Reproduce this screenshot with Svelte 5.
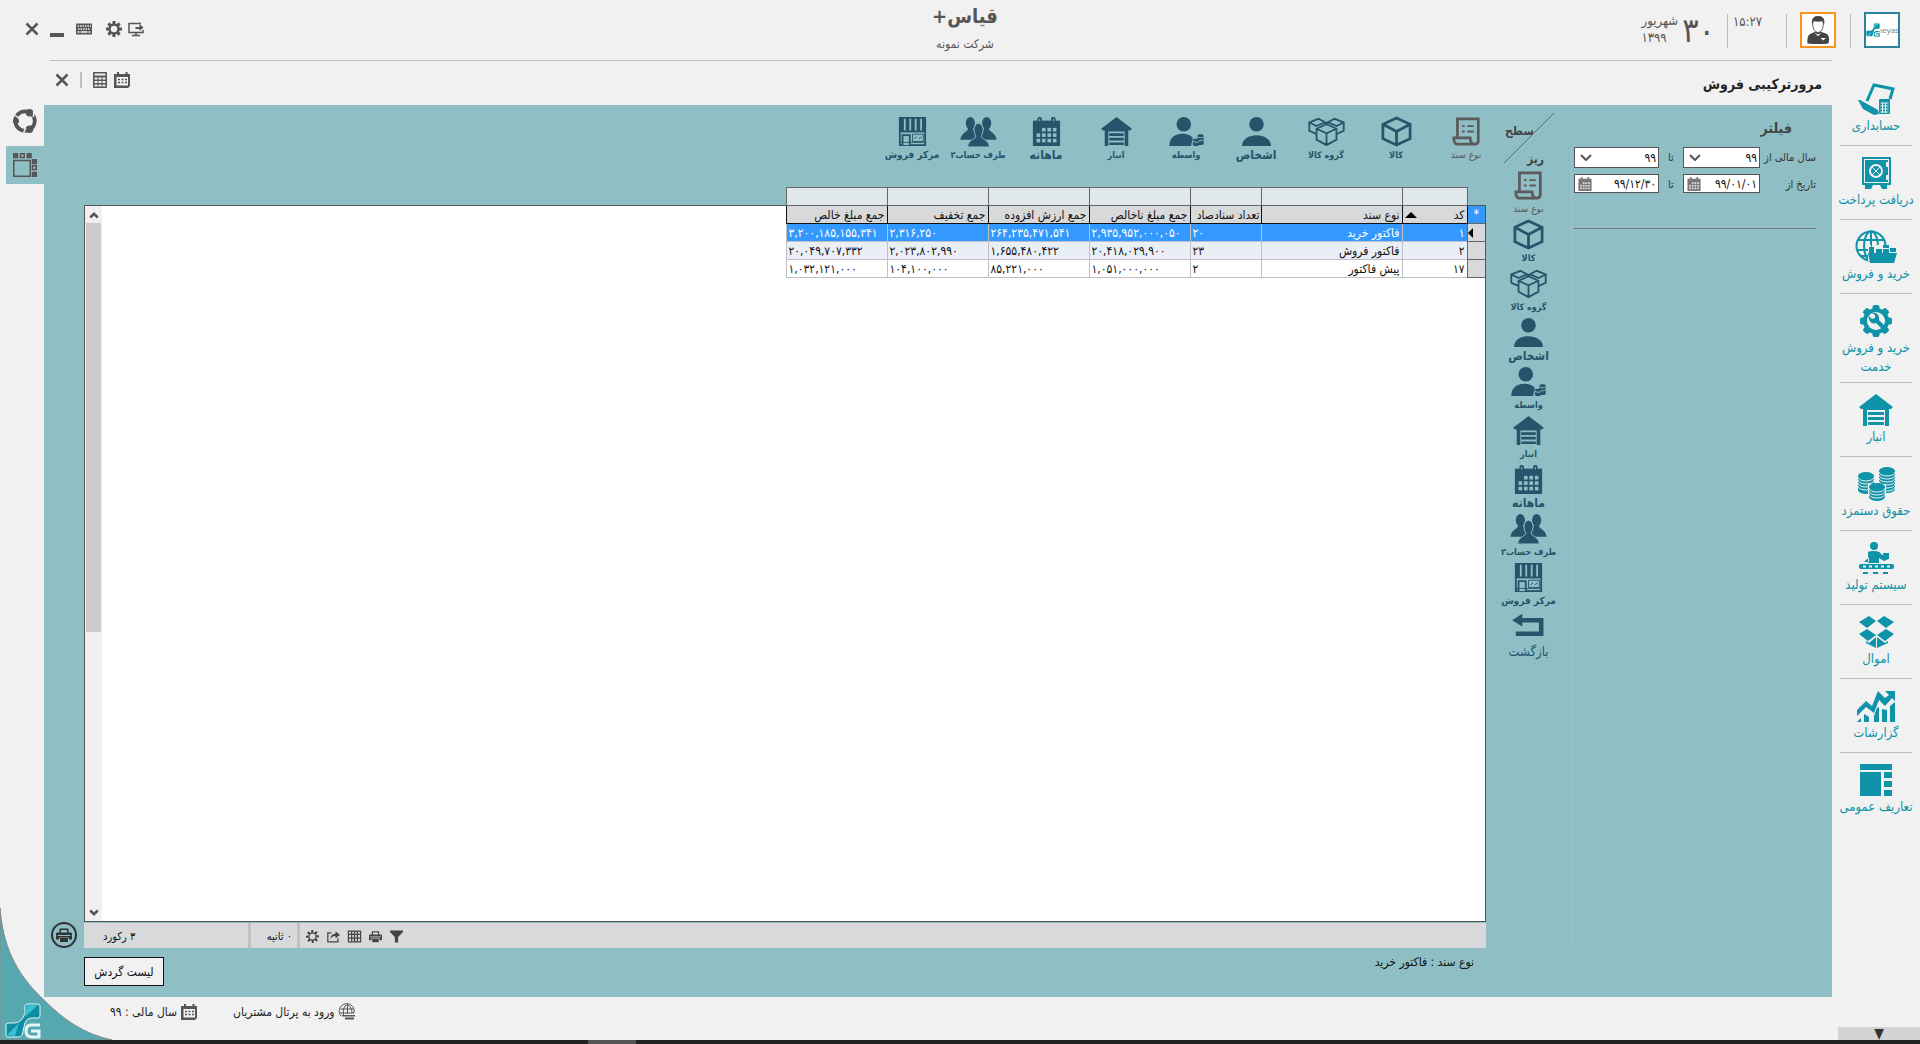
<script>
  const navItems = [
    { icon: 'ledger', label: 'حسابداری' },
    { icon: 'safe', label: 'دریافت پرداخت' },
    { icon: 'trade', label: 'خرید و فروش' },
    { icon: 'service', label: 'خرید و فروش خدمت' },
    { icon: 'store', label: 'انبار' },
    { icon: 'coins', label: 'حقوق دستمزد' },
    { icon: 'production', label: 'سیستم تولید' },
    { icon: 'assets', label: 'اموال' },
    { icon: 'reports', label: 'گزارشات' },
    { icon: 'general', label: 'تعاریف عمومی' },
  ];

  const levels = [
    { icon: 'doc', label: 'نوع سند', size: 'mid', muted: true },
    { icon: 'cube', label: 'کالا', size: 'small' },
    { icon: 'cubes', label: 'گروه کالا', size: 'small' },
    { icon: 'person', label: 'اشخاص', size: 'big' },
    { icon: 'broker', label: 'واسطه', size: 'small' },
    { icon: 'store', label: 'انبار', size: 'small' },
    { icon: 'month', label: 'ماهانه', size: 'big' },
    { icon: 'people', label: 'طرف حساب۲', size: 'small', narrow: true },
    { icon: 'shop', label: 'مرکز فروش', size: 'mid', narrow: true },
  ];

  const columns = [
    { title: 'کد', cls: 'code', sorted: true },
    { title: 'نوع سند', cls: 'kind' },
    { title: 'تعداد سنادصاد', cls: 'count' },
    { title: 'جمع مبلغ ناخالص', cls: 'amount' },
    { title: 'جمع ارزش افزوده', cls: 'amount' },
    { title: 'جمع تخفیف', cls: 'amount' },
    { title: 'جمع مبلغ خالص', cls: 'amount' },
  ];

  const rows = [
    ['۱', 'فاکتور خرید', '۲۰', '۲,۹۳۵,۹۵۲,۰۰۰,۰۵۰', '۲۶۴,۲۳۵,۴۷۱,۵۴۱', '۲,۳۱۶,۲۵۰', '۳,۲۰۰,۱۸۵,۱۵۵,۳۴۱'],
    ['۲', 'فاکتور فروش', '۲۳', '۲۰,۴۱۸,۰۲۹,۹۰۰', '۱,۶۵۵,۴۸۰,۴۲۲', '۲,۰۲۳,۸۰۲,۹۹۰', '۲۰,۰۴۹,۷۰۷,۳۳۲'],
    ['۱۷', 'پیش فاکتور', '۲', '۱,۰۵۱,۰۰۰,۰۰۰', '۸۵,۲۲۱,۰۰۰', '۱۰۴,۱۰۰,۰۰۰', '۱,۰۳۲,۱۲۱,۰۰۰'],
  ];

  let selected = $state(0);
  let dateFrom = $state('۹۹/۰۱/۰۱');
  let dateTo = $state('۹۹/۱۲/۳۰');
</script>

{#snippet icon(name)}
  <svg class="ic" viewBox="0 0 32 32" aria-hidden="true">
    {#if name === 'ledger'}
      <path d="M7 18 14 2 33 6 30 16" class="line w3" />
      <path d="M-2 17 0 17 18 27 19 31 14 32 3 26Z" />
      <rect x="19" y="16" width="11" height="15" rx="1" />
      <path d="M20.500 20H28.500M20.500 23H28.500M20.500 26H28.500M20.500 29H28.500M22.500 20V30M25.500 20V30" class="cutline" />
    {:else if name === 'safe'}
      <path d="M2 0H31V28H27V32H22L20 28H13L11 32H5V28H2Z" />
      <rect x="4.500" y="2.500" width="24" height="23" class="cutline" />
      <circle cx="16" cy="14" r="6" class="cutline w2" />
      <path d="M12 10 20 18M20 10 12 18" class="cutline" />
      <rect x="26" y="5" width="3" height="5" rx="1" class="cut" /><rect x="26" y="18" width="3" height="5" rx="1" class="cut" />
    {:else if name === 'trade'}
      <g class="line w2"><circle cx="11" cy="15" r="14.500" /><ellipse cx="11" cy="15" rx="7" ry="14.500" /><path d="M11 0V30M-2 9H24M-3 19H10M0 25H10" /></g>
      <path class="cut" d="M8 14H38V30H8Z" />
      <path d="M8 22H37L34 32H10Z" /><path d="M9 16H14V22H9ZM11 11H12V16H11ZM16 18H22V22H16ZM23 14H29V17H23ZM23 18H29V22H23ZM30 17H36V21H30Z" />
    {:else if name === 'service'}
      <g><circle cx="16" cy="16" r="13" />
        {#each [0, 45, 90, 135, 180, 225, 270, 315] as a}<rect x="12.500" y="0" width="7" height="8" rx="2" transform="rotate({a} 16 16)" />{/each}</g>
      <circle cx="16" cy="16" r="9" class="cut" />
      <path d="M9 11 12 14 15 13 15 10 12 8C17 7 20 11 19 15L25 21 22 24 16 18C12 20 8 16 9 11Z" />
    {:else if name === 'store'}
      <path d="M16 0 33 13 31 15H29V32H25V16H7V32H3V15H1L-1 13Z" /><path d="M8 18H24V21H8ZM8 23H24V26H8ZM8 28H24V31H8Z" />
    {:else if name === 'coins'}
      {#each [[6, 8, 6], [27, 3, 8], [17, 19, 4]] as [x, y, n]}
        <path class="cut" d="M{x - 9} {y - 3}H{x + 9}V{y + n * 2 + 4}H{x - 9}Z" />
        <path d="M{x - 8} {y}H{x + 8}V{y + n * 2 + 2}A8 4 0 0 1 {x - 8} {y + n * 2 + 2}Z" />
        <ellipse cx={x} cy={y} rx="8" ry="4" />
        {#each Array(Math.ceil(n * 2 / 3)) as _, i}<path class="cutline" d="M{x - 8} {y + 1 + i * 3}A8 4 0 0 0 {x + 8} {y + 1 + i * 3}" />{/each}
      {/each}
    {:else if name === 'production'}
      <circle cx="14" cy="4" r="4" /><path d="M8 21V10Q9 9 14 9 20 9 21 12L25 15 29 12 29 17 24 19 19 16V21ZM4 20H9L9 15Z" /><path d="M23 11H29V14H26L25 16H23Z" />
      <rect x="-1" y="22" width="35" height="5" rx="2" />
      <path d="M3 24.500H31" class="cutline w2" stroke-dasharray="3 3" /><path d="M3 31H29" class="line w2" stroke-dasharray="5 5" />
    {:else if name === 'assets'}
      <path d="M9 0 16 5 7 12-1 6ZM24 0 34 6 26 12 17 5ZM7 13 16 19 8 25-1 18ZM26 13 34 18 25 25 17 19ZM6 25 9 27 16 21V32L6 27ZM17 21 25 27 28 25V27L17 32Z" />
    {:else if name === 'reports'}
      <path d="M-3 20 6 11 12 16 18 1 25 8 29 5 25 1H35V11L32 8 25 16 19 10 14 23 6 17-3 26ZM-3 32 1 28V32ZM4 24 9 27V32H4ZM14 26 17 18 19 17V32H14ZM22 19 27 20V32H22ZM30 16 35 12V32H30Z" />
    {:else if name === 'general'}
      <path d="M0 0H32V6H0ZM0 8H21V32H0ZM24 8H32V14H24ZM24 17H32V23H24ZM24 26H32V32H24Z" />
    {:else if name === 'doc'}
      <path class="line w3" d="M6 22V2H29V26Q29 30 25 30H5Q2 29 2 23H20Q20 30 25 30" /><path class="line w2" d="M11 10H14M17 10H24M11 16H14M17 16H24" />
    {:else if name === 'cube'}
      <path class="line w3" d="M16 1 31 8V24L16 31 1 24V8ZM1 8 16 16 31 8M16 16V31" />
    {:else if name === 'cubes'}
      <path class="line w2" d="M16 8 27 13V25L16 31 5 25V13ZM5 13 16 18 27 13M16 18V31M5 19-3 15V6L7 2 15 6V8M-3 6 5 10 14 6M27 19 35 15V6L25 2 17 6V8M35 6 27 10 18 6" />
    {:else if name === 'person'}
      <circle cx="16" cy="8" r="8" /><path d="M0 32C0 16 32 16 32 32Z" />
    {:else if name === 'broker'}
      <circle cx="13" cy="8" r="8" /><path d="M-3 32C-3 16 17 16 23 23L21 32Z" />
      <g><rect x="23" y="24" width="7" height="8" rx="2" /><rect x="28" y="19" width="7" height="12" rx="2" /><path class="cutline" d="M23 27Q27 29 30 27M28 22Q32 24 35 22M30 26Q33 27 35 25" /></g>
    {:else if name === 'month'}
      <path d="M1 4H31V32H1Z" /><rect x="6" y="0" width="5" height="7" rx="2" /><rect x="21" y="0" width="5" height="7" rx="2" /><path class="cutline" d="M8.500 2V5M23.500 2V5" />
      {#each [12, 18, 24] as y}
        {#each [5, 11, 17, 23] as x}
          {#if y > 12 || x > 5}<rect class="cut" {x} {y} width="4" height="4" />{/if}
        {/each}
      {/each}
    {:else if name === 'people'}
      <ellipse cx="7" cy="7" rx="5" ry="7" /><ellipse cx="25" cy="7" rx="5" ry="7" /><path d="M-4 25C-3 17 4 17 5 12H10L14 25ZM36 25C35 17 28 17 27 12H22L18 25Z" />
      <path class="cutstroke" d="M11 14A5 7 0 0 1 21 14C21 18 19 20 19 22 21 25 27 25 28 33H4C5 25 11 25 13 22 13 20 11 18 11 14Z" />
    {:else if name === 'shop'}
      <path d="M1 0H31V32H1Z" /><path class="cut" d="M3 17H29V30H3Z" /><path class="cutline w2" d="M7.500 2V15M13.500 2V15M19.500 2V15M25.500 2V15" />
      <path d="M4 19H14V32H4Z" /><path class="cut" d="M6 21H12V31H6Z" /><path class="line" d="M16 19H28V27H16ZM18 24 21 22M23 24 26 22M1 28H31" />
    {:else if name === 'back'}
      <path class="line w5" d="M7 9H30V24H2" /><path d="M-2 9 9 2V16Z" />
    {:else if name === 'close'}
      <path class="line w5" d="M5 5 27 27M27 5 5 27" />
    {:else if name === 'min'}
      <path d="M2 24H30V32H2Z" />
    {:else if name === 'keyboard'}
      <rect x="0" y="5" width="32" height="22" rx="2" /><path class="cutline w3" stroke-dasharray="3 2" d="M3 10H30M4 16H29" /><path class="cutline w3" d="M3 22H7M9 22H23M25 22H29" />
    {:else if name === 'gear'}
      <circle cx="16" cy="16" r="9" class="line w5" />{#each [0, 45, 90, 135, 180, 225, 270, 315] as a}<rect x="13" y="0" width="6" height="7" transform="rotate({a} 16 16)" />{/each}
    {:else if name === 'cog'}
      <circle cx="16" cy="16" r="9" class="line w3" />{#each [0, 45, 90, 135, 180, 225, 270, 315] as a}<rect x="13" y="0" width="5" height="7" transform="rotate({a} 16 16)" />{/each}
    {:else if name === 'monitor'}
      <path class="line w3" d="M26 5H2V23H30V18M16 23V29M8 29H24" /><path d="M15 12H23V6L31 13 23 20V16H15Z" />
    {:else if name === 'calc'}
      <rect x="2" y="0" width="28" height="32" rx="2" /><path class="cut" d="M5 3H27V7H5Z" />
      {#each [11, 18, 25] as y}{#each [5, 13, 21] as x}<rect class="cut" {x} {y} width="6" height="4" />{/each}{/each}
    {:else if name === 'calendar'}
      <path d="M0 4H32V28L28 32H0Z" /><path class="cut" d="M5 10H28V27H5Z" /><rect x="6" y="0" width="4" height="7" /><rect x="23" y="0" width="4" height="7" />
      <path class="line w3" stroke-dasharray="4 3" d="M8 15H26M8 21H26" />
    {:else if name === 'cycle'}
      <circle cx="16" cy="16" r="13" class="line w5" /><circle cx="4" cy="16" r="4" /><circle cx="22" cy="5" r="5" /><circle cx="22" cy="27" r="5" /><path class="cutline w2" d="M2 8 8 12M28 2 27 11M14 32 17 25" />
    {:else if name === 'layout'}
      <path class="line w2" d="M1 10H23V31H1Z" /><path d="M0 0H7V7H0ZM9 0H16V7H9ZM18 0H25V7H18ZM25 8H32V15H25ZM25 16H32V23H25ZM25 25H32V32H25Z" /><path class="cut" d="M11 2H14V5H11ZM27 18H30V21H27Z" />
    {:else if name === 'printer'}
      <path d="M7 3H25V11H30Q32 11 32 14V25H26V21H6V25H0V14Q0 11 2 11H7Z" /><path class="cut" d="M10 6H22V11H10Z" /><path class="cutline w2" d="M3 17H29" /><path d="M8 22H24V30H8Z" />
    {:else if name === 'funnel'}
      <path d="M0 1H32V5L20 17V31H12V17L0 5Z" />
    {:else if name === 'grid'}
      <path class="line w3" d="M1 3H31V29H1ZM1 11H31M1 20H31M9 3V29M16 3V29M23 3V29" />
    {:else if name === 'export'}
      <path class="line w3" d="M11 7H2V29H27V20" /><path d="M8 22Q10 9 21 9V3L32 12 21 20V15Q13 14 8 22Z" />
    {:else if name === 'globe'}
      <g class="line w2"><path d="M4 24A15 15 0 1 1 30 18" /><path d="M9 23Q7 4 17 1 26 7 26 18M17 1V20M3 10H29M1 18H30" /></g><path d="M6 22H32V25H6ZM12 27H30V31H12Z" />
    {/if}
  </svg>
{/snippet}

{#snippet mark()}
  <svg class="mark" viewBox="0 0 36 36" role="img" aria-label="G">
    <path d="M20 3Q20 1 22 1H33Q35 1 35 3V13Q35 15 33 15H26Q22 15 20 20L17 32Q16 34 14 34H3Q1 34 1 32V22Q1 20 3 20H9Q17 20 20 10Z" class="shape" />
    <path d="M22 2H33L20 14ZM2 32 14 20 10 33Z" class="glow" />
    <path d="M35 22H26Q21 22 21 28 21 34 27 34H34V28H26" class="g" />
  </svg>
{/snippet}

<div class="app" dir="rtl" lang="fa">
  <header class="top">
    <div class="brand">
      <div class="logo-box">{@render mark()}<span dir="ltr">ıeyas</span></div>
      <i class="sep"></i>
      <button class="avatar" aria-label="کاربر">
        <svg viewBox="0 0 32 32"><path d="M4 31Q3 22 8 20L13 18H19L25 20Q30 22 28 31 16 34 4 31Z" /><path d="M10 8Q9 1 16 1 23 1 22 8V11Q21 18 16 19 11 18 10 11Z" fill="#fff" stroke="#444" /><path d="M9 10Q8 0 16 0 25 0 23 10L21 6Q16 7 11 6Z" /><path d="M12 19 16 23 20 19 16 21Z" fill="#fff" /><path d="M19 25H25L22 28Z" fill="#fff" /></svg>
      </button>
      <i class="sep"></i>
      <time class="clock">۱۵:۲۷</time>
      <i class="sep"></i>
      <div class="date"><strong>۳۰</strong><span>شهریور<br />۱۳۹۹</span></div>
    </div>
    <div class="name"><h1>قیاس+</h1><p>شرکت نمونه</p></div>
    <div class="win">
      <button aria-label="نمایشگر">{@render icon('monitor')}</button>
      <button aria-label="تنظیمات" class="g2">{@render icon('gear')}</button>
      <button aria-label="صفحه کلید" class="g3">{@render icon('keyboard')}</button>
      <button aria-label="کوچک کردن" class="g1">{@render icon('min')}</button>
      <button aria-label="بستن">{@render icon('close')}</button>
    </div>
  </header>

  <div class="middle">
    <nav class="side">
      <ul>
        {#each navItems as item}
          <li><a href="#{item.icon}">{@render icon(item.icon)}<span>{item.label}</span></a></li>
        {/each}
      </ul>
      <button class="more" aria-label="بیشتر">▼</button>
    </nav>

    <div class="center">
      <div class="titlebar">
        <h2>مرورترکیبی فروش</h2>
        <div class="tb-tools">
          <button aria-label="تقویم">{@render icon('calendar')}</button>
          <button aria-label="ماشین حساب">{@render icon('calc')}</button>
          <i></i>
          <button aria-label="بستن">{@render icon('close')}</button>
        </div>
      </div>

      <main class="panel">
        <div class="upper">
          <aside class="filter">
            <h3>فیلتر</h3>
            <form class="fields">
              <div class="field">
                <label for="year-from">سال مالی از</label>
                <span class="pick"><select id="year-from"><option>۹۹</option></select><svg viewBox="0 0 12 7"><path d="M1 1 6 6 11 1" /></svg></span>
                <label for="year-to" class="to">تا</label>
                <span class="pick"><select id="year-to"><option>۹۹</option></select><svg viewBox="0 0 12 7"><path d="M1 1 6 6 11 1" /></svg></span>
              </div>
              <div class="field">
                <label for="date-from">تاریخ از</label>
                <span class="datebox"><input id="date-from" type="text" bind:value={dateFrom} /><button type="button" aria-label="انتخاب تاریخ">{@render icon('month')}</button></span>
                <label for="date-to" class="to">تا</label>
                <span class="datebox"><input id="date-to" type="text" bind:value={dateTo} /><button type="button" aria-label="انتخاب تاریخ">{@render icon('month')}</button></span>
              </div>
              <hr />
            </form>
          </aside>

          <section class="work">
            <div class="strip">
              <div class="corner">
                <svg viewBox="0 0 50 50" aria-hidden="true"><path d="M0 50 50 0" /></svg>
                <span class="lvl">سطح</span><span class="det">ریز</span>
              </div>
              {#each levels as l}
                <button class="level {l.size}" class:muted={l.muted} class:narrow={l.narrow}>{@render icon(l.icon)}<span>{l.label}</span></button>
              {/each}
            </div>

            <div class="body">
              <div class="levels">
                {#each levels as l}
                  <button class="level {l.size}" class:muted={l.muted}>{@render icon(l.icon)}<span>{l.label}</span></button>
                {/each}
                <button class="level back">{@render icon('back')}<span>بازگشت</span></button>
              </div>

              <div class="data">
                <div class="sheet">
                  <div class="paper">
                    <div class="bar">
                      <button aria-label="بالا"><svg viewBox="0 0 8 6"><path d="M1 5 4 2 7 5" /></svg></button>
                      <div class="track"><div class="thumb"></div></div>
                      <button aria-label="پایین"><svg viewBox="0 0 8 6"><path d="M1 1 4 4 7 1" /></svg></button>
                    </div>
                  </div>
                  <table>
                    <thead>
                      <tr class="blank"><td class="ind"></td>{#each columns as c}<td class={c.cls}></td>{/each}</tr>
                      <tr>
                        <th class="ind star">*</th>
                        {#each columns as c}
                          <th class={c.cls}><span>{c.title}{#if c.sorted}<i class="sort"></i>{/if}</span></th>
                        {/each}
                      </tr>
                    </thead>
                    <tbody>
                      {#each rows as row, i}
                        <tr class:on={selected === i} onclick={() => (selected = i)}>
                          <td class="ind">{#if selected === i}<i class="cursor"></i>{/if}</td>
                          {#each row as cell, j}<td class={columns[j].cls}>{cell}</td>{/each}
                        </tr>
                      {/each}
                    </tbody>
                  </table>
                </div>
                <div class="status">
                  <div class="st-tools">
                    <button aria-label="فیلتر">{@render icon('funnel')}</button>
                    <button aria-label="چاپ">{@render icon('printer')}</button>
                    <button aria-label="جدول">{@render icon('grid')}</button>
                    <button aria-label="خروجی">{@render icon('export')}</button>
                    <button aria-label="تنظیمات">{@render icon('cog')}</button>
                  </div>
                  <span class="secs">۰ ثانیه</span>
                  <span class="count-rec">۳ رکورد</span>
                </div>
              </div>

              <div class="edge"><button class="round" aria-label="چاپ">{@render icon('printer')}</button></div>
            </div>
          </section>
        </div>
        <div class="lower">
          <p>نوع سند : فاکتور خرید</p>
          <button class="flow">لیست گردش</button>
        </div>
      </main>

      <footer class="foot">
        <a href="#portal">{@render icon('globe')}<span>ورود به پرتال مشتریان</span></a>
        <a href="#year">{@render icon('calendar')}<span>سال مالی : ۹۹</span></a>
      </footer>
    </div>

    <div class="rail">
      <button aria-label="گردش">{@render icon('cycle')}</button>
      <button aria-label="چیدمان" class="active">{@render icon('layout')}</button>
    </div>
  </div>

  <div class="taskbar"><i></i></div>

  <div class="swoosh">
    <svg class="curve" viewBox="0 0 112 132" aria-hidden="true"><path d="M0 0C3 36 14 64 44 92 64 112 84 126 112 132H0Z" /></svg>
    {@render mark()}
  </div>
</div>

<style>
  :global(body) { background: #f1f1f1; }
  .app {
    --bg: #f1f1f1;
    --panel: #8fbfc5;
    position: relative;
    display: flex;
    flex-direction: column;
    min-height: 100vh;
    background: var(--bg);
    color: #222;
    font-family: "DejaVu Sans Condensed", "DejaVu Sans", sans-serif;
    font-size: 12px;
    line-height: 16px;
  }
  .app * { box-sizing: border-box; }
  button, input, select { font: inherit; color: inherit; margin: 0; padding: 0; border: 0; background: none; }
  button { display: block; cursor: pointer; }
  h1, h2, h3, p, ul { margin: 0; padding: 0; }
  a { color: inherit; text-decoration: none; }

  .ic { display: block; width: 16px; height: 16px; fill: currentColor; overflow: visible; }
  .ic .line { fill: none; stroke: currentColor; stroke-width: 1px; }
  .ic .cut { fill: var(--bg); }
  .ic .cutline { fill: none; stroke: var(--bg); stroke-width: 1px; }
  .ic .cutstroke { stroke: var(--bg); stroke-width: 1px; }
  .ic .w2 { stroke-width: 2px; }
  .ic .w3 { stroke-width: 3px; }
  .ic .w5 { stroke-width: 5px; }

  .mark { display: block; }
  .mark .shape { fill: #0d8ca3; }
  .mark .glow { fill: #3cc0d2; }
  .mark .g { fill: none; stroke: #1a9ab0; stroke-width: 3px; }

  /* header */
  .top { display: grid; grid-template-columns: 1fr auto 1fr; height: 60px; color: #555; }
  .brand { display: flex; padding: 12px 20px 0 0; }
  .logo-box { display: flex; align-items: center; width: 36px; height: 36px; border: 2px solid #2f829c; background: #fff; direction: ltr; overflow: hidden; font: 8px "Liberation Sans", sans-serif; color: #888; }
  .logo-box .mark { width: 14px; height: 14px; flex: none; }
  .sep { width: 1px; height: 34px; margin: 2px 13px 0 14px; background: #bbb; }
  .avatar { width: 36px; height: 36px; border: 2px solid #f7941d; background: #fff; }
  .avatar svg { display: block; width: 28px; height: 28px; margin: auto; fill: #444; }
  .brand .avatar + .sep { margin-left: 24px; }
  .clock { width: 32px; font-size: 13px; padding-top: 2px; }
  .brand .clock + .sep { margin: 2px 2px 0 12px; }
  .date { display: flex; gap: 4px; }
  .date strong { font-size: 34px; line-height: 36px; font-weight: 400; }
  .date span { font-size: 13px; line-height: 17px; text-align: left; }
  .name { text-align: center; padding-left: 10px; }
  .name h1 { font-size: 20px; line-height: 32px; }
  .name p { font-size: 12px; line-height: 24px; }
  .win { display: flex; justify-content: flex-end; align-items: center; padding: 0 0 2px 24px; }
  .win .g2 { margin-right: 6px; }
  .win .g3 { margin: 0 14px 0 11px; }
  .win .g1 { margin-left: 9px; }

  .middle { display: flex; flex: 1; }

  /* main navigation */
  .side { display: flex; flex-direction: column; justify-content: space-between; width: 88px; padding-top: 12px; color: #0e93a8; }
  .side ul { list-style: none; }
  .side li { min-height: 74px; margin: 0 8px; border-bottom: 1px solid #bbb; }
  .side li:last-child { border: 0; }
  .side a { display: flex; flex-direction: column; align-items: center; margin: 0 -8px; padding: 11px 0 6px; }
  .side .ic { width: 32px; height: 32px; }
  .side span { max-width: 84px; margin-top: 1px; font-size: 13px; line-height: 19px; text-align: center; }
  .side .more { height: 13px; width: 82px; line-height: 13px; background: #d3d3d3; color: #333; font-size: 14px; }

  .center { display: flex; flex-direction: column; flex: 1; min-width: 0; }
  .titlebar { display: flex; justify-content: space-between; height: 45px; border-top: 1px solid #bbb; margin-left: 6px; padding: 0 10px 0 4px; }
  .titlebar h2 { font-size: 14px; line-height: 46px; }
  .tb-tools { display: flex; align-items: center; height: 38px; color: #555; }
  .tb-tools i { width: 2px; height: 16px; margin: 0 10px; background: #c0c0c0; }
  .tb-tools button + button { margin-right: 6px; }

  .panel { --bg: #8fbfc5; display: flex; flex-direction: column; flex: 1; background: var(--panel); }
  .upper { display: flex; flex: 1; }

  /* filters */
  .filter { display: flex; flex-direction: column; width: 261px; color: #333; }
  .filter h3 { height: 42px; padding-right: 40px; font-size: 14px; line-height: 46px; color: #444; }
  .fields { flex: 1; border-left: 1px solid #b9b9b9; padding: 0 16px 0 2px; }
  .field { display: grid; grid-template-columns: 56px 77px 24px minmax(0, 1fr); height: 27px; align-items: start; }
  .field label { font-size: 11px; line-height: 22px; white-space: nowrap; }
  .field .to { text-align: center; }
  .pick { display: grid; height: 21px; border: 1px solid #555; background: #fff; color: #111; }
  .pick select, .pick svg { grid-area: 1 / 1; }
  .pick select { appearance: none; padding: 0 2px; line-height: 16px; width: 100%; outline: 0; }
  .pick svg { justify-self: end; align-self: center; width: 12px; height: 7px; margin-left: 5px; pointer-events: none; }
  .pick path { fill: none; stroke: #555; stroke-width: 2px; }
  .datebox { --bg: #d8d8d8; display: flex; height: 19px; border: 1px solid #555; background: #fff; color: #111; }
  .datebox input { flex: 1; width: 0; min-width: 0; padding-right: 2px; outline: 0; text-align: right; }
  .datebox button { margin-left: 3px; color: #777; }
  .datebox .ic { width: 14px; height: 14px; }
  .fields hr { height: 1px; margin: 27px 0 0; border: 0; background: #777; }

  /* grouping levels */
  .work { display: flex; flex-direction: column; flex: 1; min-width: 0; }
  .strip { display: flex; height: 65px; }
  .corner { position: relative; width: 70px; }
  .corner svg { position: absolute; left: 3px; top: 8px; width: 50px; height: 50px; }
  .corner path { fill: none; stroke: #666; stroke-width: 1px; }
  .corner span { position: absolute; font-size: 12px; font-weight: 700; color: #444; }
  .corner .lvl { left: 4px; top: 18px; }
  .corner .det { left: 26px; top: 46px; }
  .level { display: flex; flex-direction: column; align-items: center; color: #27536b; white-space: nowrap; height: 49px; width: 70px; }
  .level.narrow { width: 66px; }
  .level .ic { width: 29px; height: 29px; margin-top: 1px; }
  .level span { margin-top: 2px; line-height: 14px; font-weight: 700; }
  .level.small span { font-size: 9px; }
  .level.mid span { font-size: 10px; }
  .level.big span { font-size: 12px; }
  .level.muted { color: #5c5a5b; }
  .level.muted span { font-weight: 400; }
  .strip .level { margin-top: 11px; }
  .body { display: flex; flex: 1; }
  .levels { width: 85px; }
  .levels .level { width: 85px; }
  .levels .back span { margin-top: 4px; font-size: 13px; font-weight: 400; }

  /* data grid */
  .data { display: flex; flex-direction: column; flex: 1; min-width: 0; padding-top: 17px; }
  .sheet { display: grid; grid-template-rows: 18px 1fr; flex: 1; }
  .paper { grid-area: 2 / 1; display: flex; justify-content: flex-end; border: 1px solid #555; background: #fff; }
  table { grid-area: 1 / 1 / 3 / 2; align-self: start; justify-self: start; margin-right: 1px; table-layout: fixed; width: 699px; border-collapse: collapse; font-size: 12px; color: #111; }
  td, th { height: 18px; padding: 0 2px; line-height: 14px; font-weight: 400; white-space: nowrap; overflow: hidden; border: 1px solid #c0c0c0; text-align: left; }
  th { background: #d8d9db; border-color: #111; text-align: right; }
  th span { display: flex; justify-content: space-between; align-items: center; }
  .blank td { background: #e1e8eb; border-color: #666; }
  .blank .ind { background: transparent; border: 0; }
  tbody tr:nth-child(2) td { background: #eaeef6; }
  tbody tr.on td { background: #3399ff; color: #fff; }
  .ind { width: 18px; }
  tbody tr .ind, tbody tr:nth-child(2) .ind, tbody tr.on .ind { background: #d8d9db; border-color: #666; border-right: 0; padding: 0; }
  .star { background: #3399ff; color: #fff; border: 0; text-align: center; }
  .code { width: 65px; text-align: right; }
  .kind { width: 141px; text-align: right; }
  .count { width: 71px; }
  th.count { padding: 0 1px; }
  .amount { width: 101px; }
  .sort { border: 6px solid transparent; border-top: 0; border-bottom-color: #000; }
  .cursor { display: block; width: 0; margin-right: auto; border: 5px solid transparent; border-left: 0; border-right: 5px solid #000; }

  .bar { display: flex; flex-direction: column; width: 17px; background: #f0f0f0; }
  .bar button { height: 17px; }
  .bar svg { display: block; width: 10px; height: 8px; margin: auto; }
  .bar path { fill: none; stroke: #555; stroke-width: 2px; }
  .track { flex: 1; padding: 0 1px; }
  .thumb { height: 60%; background: #cbcbcb; }

  .status { --bg: #d8d9db; display: flex; justify-content: flex-end; align-items: stretch; height: 25px; margin-top: 1px; background: var(--bg); font-size: 11px; line-height: 28px; color: #111; }
  .st-tools { display: flex; align-items: center; gap: 8px; padding: 2px 0 0 6px; color: #444; }
  .st-tools .ic { width: 13px; height: 13px; }
  .secs, .count-rec { border-right: 3px solid #c0c0c0; }
  .secs { width: 49px; padding-right: 5px; }
  .count-rec { width: 167px; text-align: left; padding-left: 19px; }
  .edge { display: flex; align-items: flex-end; justify-content: center; width: 40px; }
  .round { width: 26px; height: 26px; border: 2px solid #333; border-radius: 50%; color: #333; }
  .round .ic { margin: auto; }

  .lower { display: flex; justify-content: space-between; height: 49px; padding: 9px 0 0 40px; }
  .lower p { margin-top: -2px; padding-right: 358px; line-height: 14px; color: #111; }
  .flow { width: 80px; height: 29px; border: 1px solid #111; background: #f1f1f1; color: #111; }

  .foot { display: flex; justify-content: flex-end; gap: 36px; height: 43px; padding: 7px 0 0 66px; color: #222; }
  .foot a { display: flex; gap: 4px; height: 16px; align-items: center; }
  .foot .ic { color: #555; }

  .rail { display: flex; flex-direction: column; gap: 6px; width: 44px; padding-top: 42px; color: #555; }
  .rail button { padding: 0 7px; width: 38px; height: 38px; }
  .rail .ic { width: 24px; height: 24px; }
  .rail .active { --bg: #8fbfc5; background: var(--panel); }

  .taskbar { display: flex; height: 4px; background: #222; direction: ltr; }
  .taskbar i { width: 48px; margin-left: 588px; background: #555; }

  .swoosh { position: absolute; left: 0; bottom: 4px; width: 112px; height: 132px; pointer-events: none; }
  .curve { display: block; width: 100%; height: 100%; }
  .curve path { fill: #55a8b0; stroke: #8a8a8a; stroke-width: 1px; }
  .swoosh .mark { position: absolute; left: 5px; bottom: 1px; width: 36px; height: 36px; }
  .swoosh .shape { stroke: #e6f6f8; stroke-width: 1px; }
  .swoosh .g { stroke: #e6f6f8; }
</style>
